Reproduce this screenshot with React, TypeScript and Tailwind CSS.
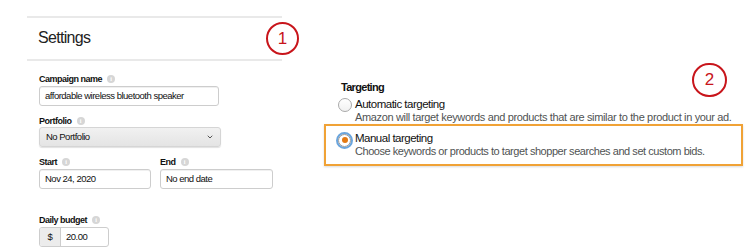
import { ChevronDown } from "lucide-react";

const Info = () => (
  <span className="ml-[5px] inline-flex h-[8px] w-[8px] items-center justify-center rounded-full bg-[#d6d6d6] font-['Liberation_Serif',serif] text-[6px] font-bold leading-none tracking-normal text-white">
    i
  </span>
);

const Label = ({ text }: { text: string }) => (
  <div className="flex items-center text-[9px] font-bold leading-[12px] tracking-[-0.5px] text-[#111]">
    {text}
    <Info />
  </div>
);

const inputBox =
  "mt-px flex h-5 items-center rounded-[3px] border border-[#cdcdcd] bg-white px-[5px] text-[9.5px] tracking-[-0.5px] text-[#111] shadow-[inset_0_1px_0_rgba(0,0,0,0.06)]";

const App = () => {
  return (
    <div className="relative flex h-[252px] w-[750px] overflow-hidden bg-white font-['Liberation_Sans',Arial,sans-serif]">
      {/* Settings panel */}
      <div className="ml-[27px] mt-4 w-[255px]">
        <div className="h-[45px] border-y-2 border-[#e9e9e9] pl-[11px] pt-[10px] text-[16px] leading-[20px] tracking-[-0.7px] text-[#222]">
          Settings
        </div>

        <div className="mt-[12px] pl-[12px]">
          <Label text="Campaign name" />
          <div className={`${inputBox} w-[180px]`}>affordable wireless bluetooth speaker</div>

          <div className="mt-[9px]">
            <Label text="Portfolio" />
          </div>
          <div className="flex h-5 w-[182px] items-center justify-between rounded-[3px] border border-[#d5d5d5] bg-gradient-to-b from-[#f1f1f1] to-[#e4e4e4] pl-[6px] pr-[6px] text-[9.5px] tracking-[-0.5px] text-[#111] shadow-[0_1px_1px_rgba(0,0,0,0.12)]">
            No Portfolio
            <ChevronDown size={8} strokeWidth={3} className="text-[#555]" />
          </div>

          <div className="mt-[9px] flex gap-[9px]">
            <div>
              <Label text="Start" />
              <div className={`${inputBox} w-[112px]`}>Nov 24, 2020</div>
            </div>
            <div>
              <Label text="End" />
              <div className={`${inputBox} w-[113px]`}>No end date</div>
            </div>
          </div>

          <div className="mt-[25px]">
            <Label text="Daily budget" />
          </div>
          <div className="mt-px flex h-5 w-[70px] overflow-hidden rounded-[3px] border border-[#cdcdcd] text-[9.5px] tracking-[-0.5px] text-[#111]">
            <span className="flex w-[21px] items-center justify-center border-r border-[#cdcdcd] bg-[#ececec]">$</span>
            <span className="flex items-center pl-[5px]">20.00</span>
          </div>
        </div>
      </div>

      {/* Targeting panel */}
      <div className="ml-[42px] mt-[80px] w-[419px]">
        <div className="pl-[17px] text-[11px] font-bold leading-[14px] tracking-[-0.7px] text-[#111]">Targeting</div>
        <div className="mt-[2.5px] flex pl-[14px]">
          <span className="mt-[1px] h-[14px] w-[14px] shrink-0 rounded-full border border-[#a9a9a9] bg-gradient-to-b from-white to-[#f1f1f1]" />
          <div className="ml-[3px] whitespace-nowrap">
            <div className="text-[11.5px] leading-[14px] tracking-[-0.5px] text-[#111]">Automatic targeting</div>
            <div className="text-[11px] leading-[13px] tracking-[-0.35px] text-[#505353]">
              Amazon will target keywords and products that are similar to the product in your ad.
            </div>
          </div>
        </div>

        <div className="flex h-[42px] border-2 border-[#f0a236] pl-[10px] pt-[5px] shadow-[0_1px_2px_rgba(0,0,0,0.15)]">
          <span className="mt-[1px] flex h-[17px] w-[17px] shrink-0 items-center justify-center rounded-full border-2 border-[#6aa5dd] bg-white">
            <span className="flex h-[13px] w-[13px] items-center justify-center rounded-full border border-[#9a9a9a]">
              <span className="h-[6px] w-[6px] rounded-full bg-[#e47911]" />
            </span>
          </span>
          <div className="ml-[2px] whitespace-nowrap">
            <div className="text-[11.5px] leading-[14px] tracking-[-0.5px] text-[#111]">Manual targeting</div>
            <div className="text-[11px] leading-[13px] tracking-[-0.45px] text-[#505353]">
              Choose keywords or products to target shopper searches and set custom bids.
            </div>
          </div>
        </div>
      </div>

      {/* Annotations */}
      <div className="absolute left-[266px] top-[22px] flex h-[33px] w-[33px] items-center justify-center rounded-full border-2 border-[#c8151b] text-[17px] text-[#c8151b]">
        1
      </div>
      <div className="absolute left-[692px] top-[63px] flex h-[34px] w-[35px] items-center justify-center rounded-full border-2 border-[#c8151b] text-[17px] text-[#c8151b]">
        2
      </div>
    </div>
  );
};

export default App;
